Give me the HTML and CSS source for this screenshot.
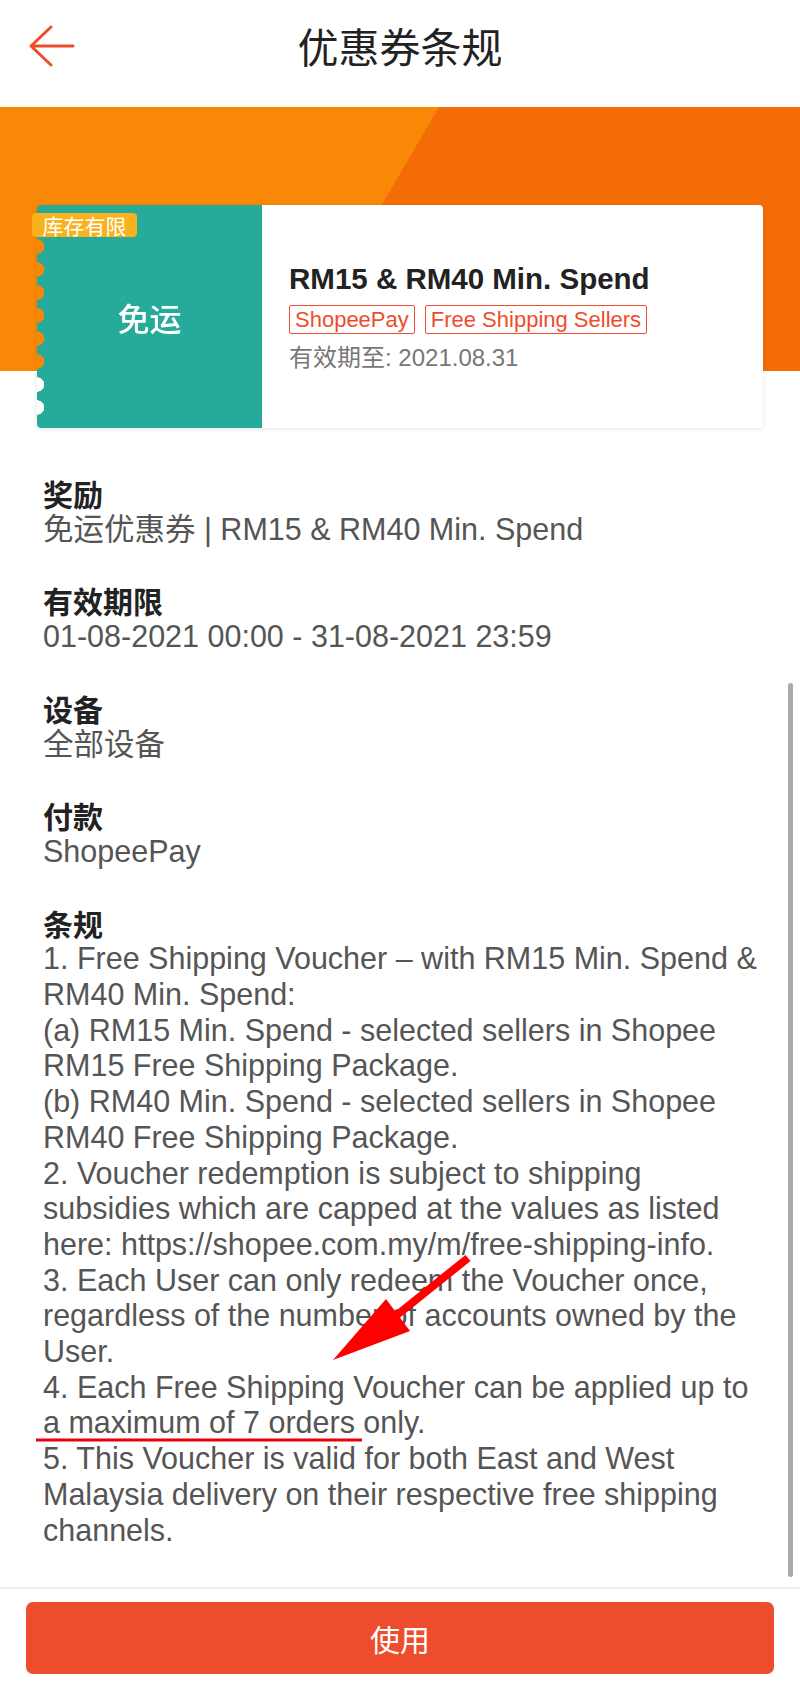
FILE: index.html
```html
<!DOCTYPE html>
<html lang="zh-CN">
<head>
<meta charset="utf-8">
<title>优惠券条规</title>
<link rel="stylesheet" href="styles.css">
</head>
<body>
<div class="app">
  <header class="topbar">
    <svg class="back" viewBox="0 0 48 44" aria-hidden="true">
      <path d="M45 22H3M23 3L3 22l20 19" fill="none" stroke="#ee4d2d" stroke-width="3" stroke-linecap="round" stroke-linejoin="round"/>
    </svg>
    <h1 class="topbar-title">优惠券条规</h1>
  </header>

  <main class="content">
    <div class="hero">
      <div class="voucher">
        <div class="voucher-type">免运</div>
        <div class="voucher-info">
          <div class="voucher-title">RM15 &amp; RM40 Min. Spend</div>
          <div class="voucher-tags">
            <span class="tag">ShopeePay</span>
            <span class="tag">Free Shipping Sellers</span>
          </div>
          <div class="voucher-expiry">有效期至: 2021.08.31</div>
        </div>
        <span class="badge">库存有限</span>
      </div>
    </div>

    <div class="details">
      <section class="detail">
        <h3 class="detail-label">奖励</h3>
        <p class="detail-value">免运优惠券 | RM15 &amp; RM40 Min. Spend</p>
      </section>
      <section class="detail">
        <h3 class="detail-label">有效期限</h3>
        <p class="detail-value">01-08-2021 00:00 - 31-08-2021 23:59</p>
      </section>
      <section class="detail">
        <h3 class="detail-label">设备</h3>
        <p class="detail-value">全部设备</p>
      </section>
      <section class="detail">
        <h3 class="detail-label">付款</h3>
        <p class="detail-value">ShopeePay</p>
      </section>
      <section class="detail">
        <h3 class="detail-label">条规</h3>
        <p class="detail-value">1. Free Shipping Voucher – with RM15 Min. Spend &amp; RM40 Min. Spend:<br>(a) RM15 Min. Spend - selected sellers in Shopee RM15 Free Shipping Package.<br>(b) RM40 Min. Spend - selected sellers in Shopee RM40 Free Shipping Package.<br>2. Voucher redemption is subject to shipping subsidies which are capped at the values as listed here: https://shopee.com.my/m/free-shipping-info.<br>3. Each User can only redeem the Voucher once, regardless of the number of accounts owned by the User.<br>4. Each Free Shipping Voucher can be applied up to a maximum of 7 orders only.<br>5. This Voucher is valid for both East and West Malaysia delivery on their respective free shipping channels.</p>
      </section>
    </div>

    <div class="scrollbar"></div>
  </main>

  <footer class="footer">
    <button class="use-btn" type="button">使用</button>
  </footer>

  <svg class="annotation" viewBox="0 0 800 1687" aria-hidden="true">
    <line x1="392" y1="1319" x2="468" y2="1258" stroke="#ff0000" stroke-width="8" stroke-linecap="butt"/>
    <polygon points="333,1360 386,1299 410,1331" fill="#ff0000"/>
    <line x1="36" y1="1440" x2="362" y2="1440" stroke="#e8000b" stroke-width="3"/>
  </svg>
</div>
</body>
</html>
```

FILE: styles.css
```css
* {
  box-sizing: border-box;
  margin: 0;
  padding: 0;
}

html, body {
  margin: 0;
  background: #fff;
}

body {
  font-family: "Liberation Sans", "Noto Sans CJK SC", sans-serif;
  color: #222;
}

.app {
  position: relative;
  width: 800px;
  height: 1687px;
  display: flex;
  flex-direction: column;
  overflow: hidden;
  background: #fff;
}

/* ---------- top bar ---------- */
.topbar {
  height: 107px;
  flex: none;
  display: grid;
  grid-template-columns: 1fr auto 1fr;
  align-items: start;
  padding-top: 20px;
  background: #fff;
}

.back {
  width: 48px;
  height: 44px;
  margin-left: 28px;
  margin-top: 4px;
}

.topbar-title {
  font-family: "Noto Sans CJK SC", sans-serif;
  font-size: 41px;
  font-weight: 400;
  line-height: 50px;
  color: #222;
}

/* ---------- scrolling content ---------- */
.content {
  flex: 1;
  position: relative;
  overflow: hidden;
}

.hero {
  padding: 98px 37px 0;
  background: linear-gradient(120.3deg, #f98806 379px, #f46c05 379px) top / 100% 264px no-repeat;
}

.voucher {
  position: relative;
  display: flex;
  height: 223px;
  border-radius: 4px;
  box-shadow: 0 1px 5px rgba(0, 0, 0, 0.1);
}

.voucher-type {
  width: 225px;
  flex: none;
  display: flex;
  align-items: center;
  justify-content: center;
  background: #26aa99;
  color: #fff;
  font-family: "Noto Sans CJK SC", sans-serif;
  font-size: 32px;
  font-weight: 500;
  border-radius: 4px 0 0 4px;
  -webkit-mask:
    linear-gradient(#000 0 0) right top / calc(100% - 8px) 100% no-repeat,
    linear-gradient(#000 0 0) left top / 8px 30px no-repeat,
    linear-gradient(#000 0 0) left bottom / 8px 9px no-repeat,
    radial-gradient(circle at 0 50%, transparent 7px, #000 7.5px) left 30px / 8px 23px repeat-y;
  mask:
    linear-gradient(#000 0 0) right top / calc(100% - 8px) 100% no-repeat,
    linear-gradient(#000 0 0) left top / 8px 30px no-repeat,
    linear-gradient(#000 0 0) left bottom / 8px 9px no-repeat,
    radial-gradient(circle at 0 50%, transparent 7px, #000 7.5px) left 30px / 8px 23px repeat-y;
}

.voucher-info {
  flex: 1;
  display: flex;
  flex-direction: column;
  justify-content: center;
  padding-left: 27px;
  background: #fff;
  border-radius: 0 4px 4px 0;
}

.voucher-title {
  font-size: 29.5px;
  font-weight: 700;
  line-height: 36px;
  color: #222;
}

.voucher-tags {
  display: flex;
  gap: 10px;
  margin-top: 8px;
}

.tag {
  border: 1px solid #ee4d2d;
  border-radius: 2px;
  padding: 0 5px;
  color: #ee4d2d;
  font-size: 22px;
  line-height: 27px;
}

.voucher-expiry {
  margin-top: 9px;
  font-size: 24px;
  line-height: 30px;
  color: #777;
}

.badge {
  position: absolute;
  left: -5px;
  top: 8px;
  width: 105px;
  height: 24px;
  border-radius: 4px;
  background: #f9b21d;
  color: #fff;
  font-family: "Noto Sans CJK SC", sans-serif;
  font-size: 21px;
  line-height: 24px;
  text-align: center;
}

/* ---------- details ---------- */
.details {
  padding: 48px 33px 0 43px;
}

.detail + .detail {
  margin-top: 36px;
}

.detail-label {
  font-family: "Noto Sans CJK SC", sans-serif;
  font-size: 30px;
  font-weight: 700;
  line-height: 35.7px;
  color: #222;
}

.detail-value {
  font-size: 30.5px;
  line-height: 35.7px;
  color: #555;
}

.scrollbar {
  position: absolute;
  top: 576px;
  right: 7px;
  width: 5px;
  height: 894px;
  border-radius: 3px;
  background: #a9a9a9;
}

/* ---------- footer ---------- */
.footer {
  height: 100px;
  flex: none;
  border-top: 2px solid #efefef;
  padding: 13px 26px 0;
  background: #fff;
}

.use-btn {
  display: block;
  width: 100%;
  height: 72px;
  border: 0;
  border-radius: 7px;
  background: #ee4d2d;
  color: #fff;
  font-family: "Noto Sans CJK SC", sans-serif;
  font-size: 30px;
  line-height: 72px;
}

/* ---------- annotation overlay ---------- */
.annotation {
  position: absolute;
  left: 0;
  top: 0;
  width: 800px;
  height: 1687px;
  pointer-events: none;
}
```
